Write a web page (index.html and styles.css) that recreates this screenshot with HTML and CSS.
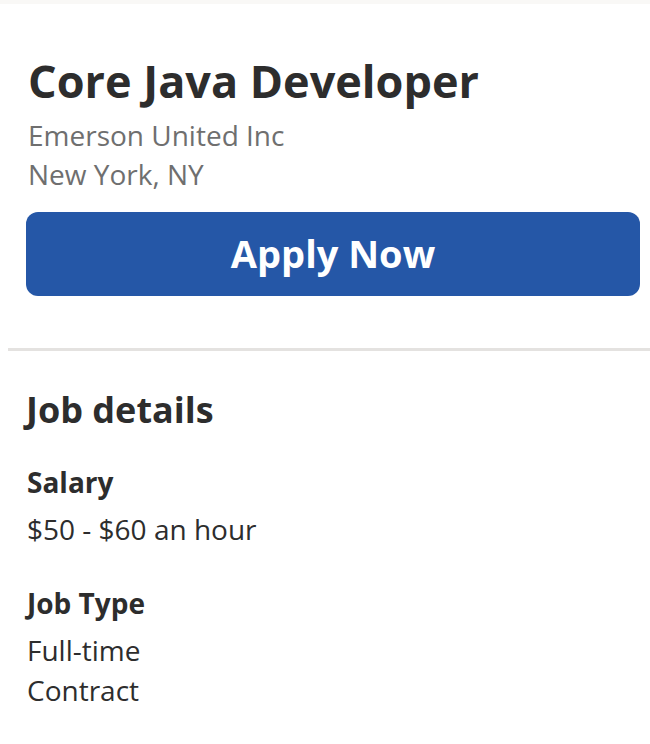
FILE: index.html
```html
<!DOCTYPE html>
<html>
<head>
<meta charset="utf-8">
<link rel="stylesheet" href="styles.css">
</head>
<body>
<div class="topbar"></div>
<header class="job-header">
  <h1 class="title">Core Java Developer</h1>
  <div class="company">Emerson United Inc</div>
  <div class="location">New York, NY</div>
  <button class="apply">Apply Now</button>
</header>
<hr class="divider">
<section class="details">
  <h2 class="details-title">Job details</h2>
  <div class="item">
    <div class="item-label">Salary</div>
    <div class="item-value">$50 - $60 an hour</div>
  </div>
  <div class="item">
    <div class="item-label">Job Type</div>
    <div class="item-value">Full-time</div>
    <div class="item-value">Contract</div>
  </div>
</section>
</body>
</html>
```
FILE: styles.css
```css
html, body {
  margin: 0;
  padding: 0;
  background: #ffffff;
  font-family: "Open Sans", "Noto Sans", sans-serif;
  color: #2d2d2d;
}
.topbar {
  height: 4px;
  background: #f9f8f6;
}
.job-header {
  padding: 50px 10px 0 26px;
}
.title {
  margin: 0;
  font-size: 45px;
  line-height: 54px;
  font-weight: 700;
  color: #2d2d2d;
  padding-left: 2px;
}
.company {
  margin-top: 8px;
}
.company, .location {
  font-size: 28px;
  line-height: 39px;
  color: #6f6f6f;
  padding-left: 2px;
}
.apply {
  display: block;
  width: 100%;
  height: 84px;
  margin-top: 18px;
  padding: 0 0 2px;
  border: none;
  border-radius: 12px;
  background: #2557a7;
  color: #ffffff;
  font-family: "Open Sans", "Noto Sans", sans-serif;
  font-weight: 700;
  font-size: 38px;
  cursor: pointer;
}
.divider {
  margin: 52px 0 0 8px;
  border: none;
  height: 3px;
  background: #e4e2e0;
}
.details {
  padding: 35px 10px 0 26px;
}
.details-title {
  margin: 0;
  font-size: 36px;
  line-height: 48px;
  font-weight: 700;
}
.item {
  margin-top: 28px;
}
.item + .item {
  margin-top: 34px;
}
.item-label {
  font-size: 28px;
  line-height: 40px;
  font-weight: 700;
  margin-bottom: 7px;
  padding-left: 1px;
}
.item-value {
  font-size: 28px;
  line-height: 40px;
  padding-left: 1px;
}
```
